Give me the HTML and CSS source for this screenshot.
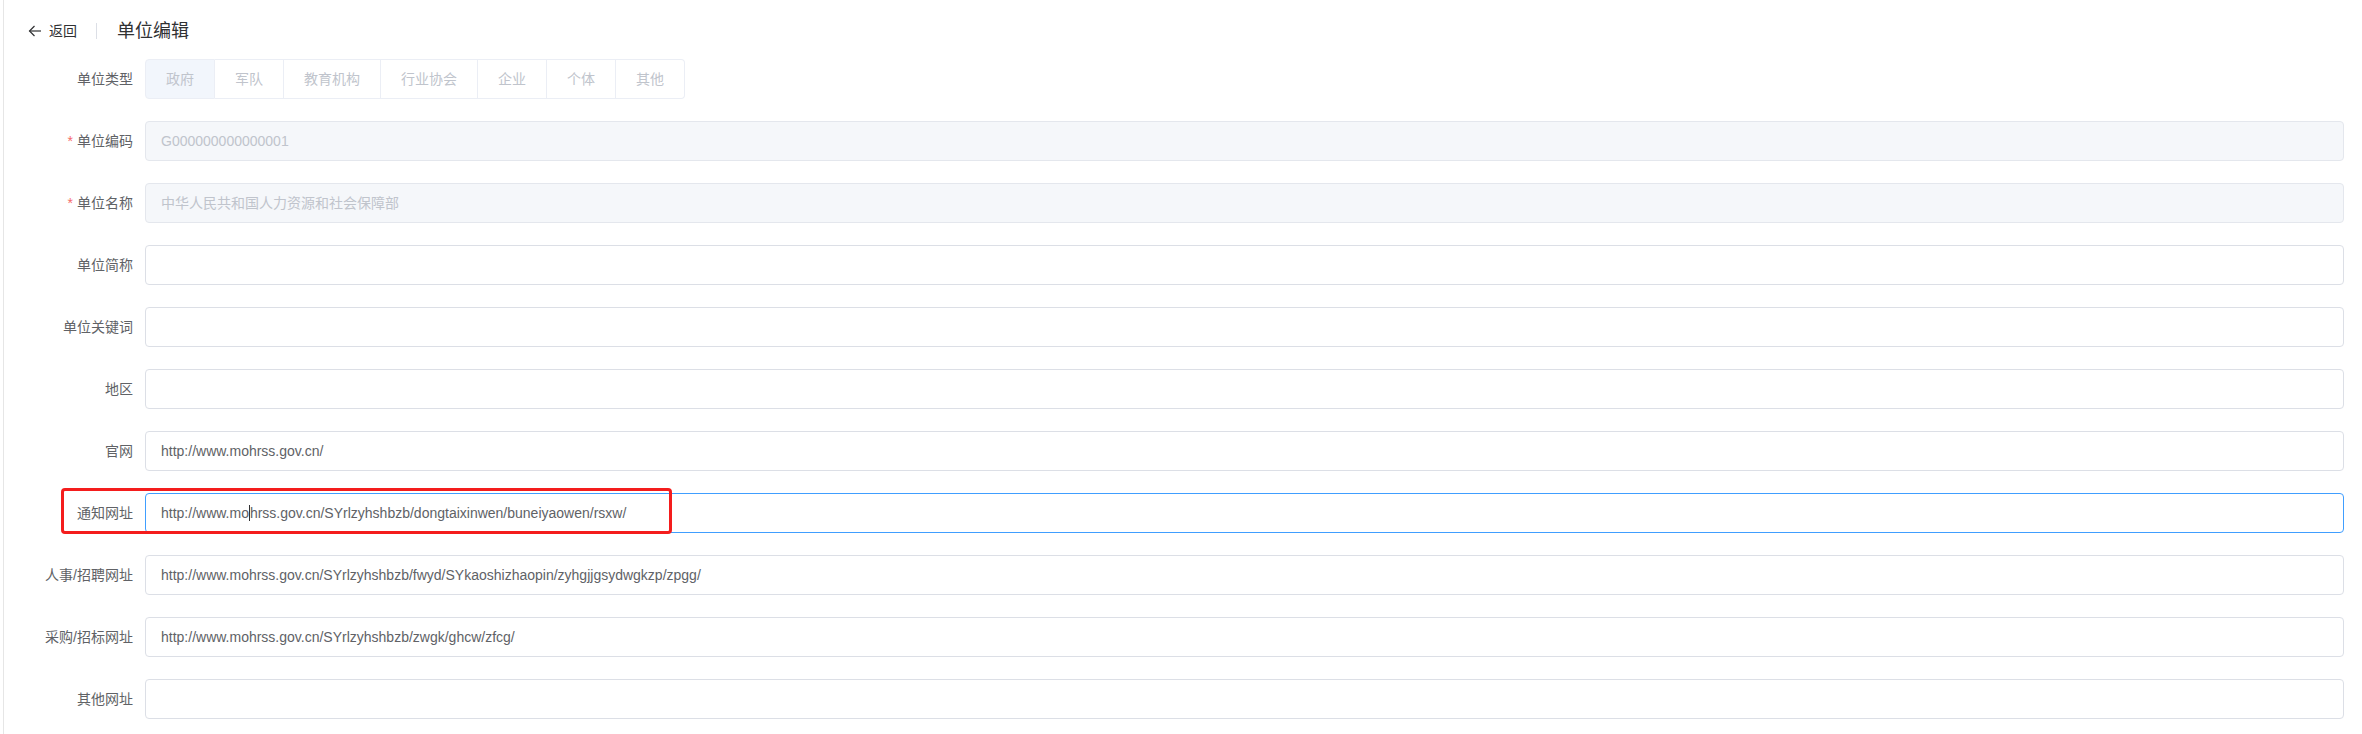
FILE: index.html
```html
<!DOCTYPE html>
<html lang="zh-CN">
<head>
<meta charset="utf-8">
<title>单位编辑</title>
<link rel="stylesheet" href="styles.css">
</head>
<body>
<div class="page">
  <div class="page-header">
    <div class="back">
      <svg class="back-icon" width="14" height="14" viewBox="0 0 14 14" aria-hidden="true">
        <path d="M1.5 7 H13" fill="none" stroke="#303133" stroke-width="1.2"/>
        <path d="M6.5 2 L1.5 7 L6.5 12" fill="none" stroke="#303133" stroke-width="1.2"/>
      </svg>
      <span class="back-text">返回</span>
    </div>
    <div class="header-title">单位编辑</div>
  </div>

  <form class="form">
    <div class="form-item">
      <label class="form-label">单位类型</label>
      <div class="form-content">
        <div class="segment">
          <span class="seg-item is-checked">政府</span>
          <span class="seg-item">军队</span>
          <span class="seg-item">教育机构</span>
          <span class="seg-item">行业协会</span>
          <span class="seg-item">企业</span>
          <span class="seg-item">个体</span>
          <span class="seg-item">其他</span>
        </div>
      </div>
    </div>

    <div class="form-item">
      <label class="form-label"><span class="req">*</span>单位编码</label>
      <div class="form-content"><div class="input is-disabled">G000000000000001</div></div>
    </div>

    <div class="form-item">
      <label class="form-label"><span class="req">*</span>单位名称</label>
      <div class="form-content"><div class="input is-disabled">中华人民共和国人力资源和社会保障部</div></div>
    </div>

    <div class="form-item">
      <label class="form-label">单位简称</label>
      <div class="form-content"><div class="input"></div></div>
    </div>

    <div class="form-item">
      <label class="form-label">单位关键词</label>
      <div class="form-content"><div class="input"></div></div>
    </div>

    <div class="form-item">
      <label class="form-label">地区</label>
      <div class="form-content"><div class="input"></div></div>
    </div>

    <div class="form-item">
      <label class="form-label">官网</label>
      <div class="form-content"><div class="input">http://www.mohrss.gov.cn/</div></div>
    </div>

    <div class="form-item is-marked">
      <label class="form-label">通知网址</label>
      <div class="form-content"><div class="input is-focus">http://www.mo<span class="caret"></span>hrss.gov.cn/SYrlzyhshbzb/dongtaixinwen/buneiyaowen/rsxw/</div></div>
      <div class="mark-box"></div>
    </div>

    <div class="form-item">
      <label class="form-label">人事/招聘网址</label>
      <div class="form-content"><div class="input">http://www.mohrss.gov.cn/SYrlzyhshbzb/fwyd/SYkaoshizhaopin/zyhgjjgsydwgkzp/zpgg/</div></div>
    </div>

    <div class="form-item">
      <label class="form-label">采购/招标网址</label>
      <div class="form-content"><div class="input">http://www.mohrss.gov.cn/SYrlzyhshbzb/zwgk/ghcw/zfcg/</div></div>
    </div>

    <div class="form-item">
      <label class="form-label">其他网址</label>
      <div class="form-content"><div class="input"></div></div>
    </div>
  </form>
</div>
</body>
</html>
```

FILE: styles.css
```css
html, body {
  margin: 0;
  padding: 0;
  background: #ffffff;
}

body {
  font-family: "Liberation Sans", "Noto Sans CJK SC", sans-serif;
  font-size: 14px;
  color: #606266;
}

.page {
  margin-left: 3px;
  border-left: 1px solid #e6e6e6;
  min-height: 734px;
  box-sizing: border-box;
  padding: 19px 18px 0 24px;
}

/* header */
.page-header {
  display: flex;
  align-items: center;
  height: 24px;
}

.back {
  display: flex;
  align-items: center;
  position: relative;
  margin-right: 40px;
  color: #303133;
  font-size: 14px;
}

.back::after {
  content: "";
  position: absolute;
  right: -20px;
  top: 50%;
  width: 1px;
  height: 16px;
  margin-top: -8px;
  background: #dcdfe6;
}

.back-icon {
  display: block;
  margin-right: 7px;
}

.back-text {
  line-height: 24px;
}

.header-title {
  font-size: 18px;
  color: #303133;
  line-height: 24px;
}

/* form */
.form {
  margin: 16px 0 0 0;
}

.form-item {
  display: flex;
  margin-bottom: 22px;
  position: relative;
}

.form-label {
  flex: 0 0 117px;
  box-sizing: border-box;
  padding-right: 12px;
  text-align: right;
  line-height: 40px;
  font-size: 14px;
  color: #606266;
  white-space: nowrap;
}

.req {
  color: #f56c6c;
  margin-right: 4px;
}

.form-content {
  flex: 1;
  min-width: 0;
}

/* segmented radio */
.segment {
  display: inline-flex;
}

.seg-item {
  display: block;
  padding: 12px 20px;
  line-height: 14px;
  font-size: 14px;
  color: #c0c4cc;
  background: #ffffff;
  border: 1px solid #ebeef5;
  border-left: 0;
}

.seg-item:first-child {
  border-left: 1px solid #ebeef5;
  border-radius: 4px 0 0 4px;
}

.seg-item:last-child {
  border-radius: 0 4px 4px 0;
}

.seg-item.is-checked {
  background: #f2f6fc;
}

/* inputs */
.input {
  height: 40px;
  box-sizing: border-box;
  border: 1px solid #dcdfe6;
  border-radius: 4px;
  padding: 0 15px;
  line-height: 38px;
  font-size: 14px;
  color: #606266;
  background: #ffffff;
  white-space: nowrap;
  overflow: hidden;
}

.input.is-disabled {
  background: #f5f7fa;
  border-color: #e4e7ed;
  color: #c0c4cc;
}

.input.is-focus {
  border-color: #409eff;
}

.caret {
  display: inline-block;
  width: 0;
  height: 16px;
  border-left: 1px solid #303133;
  vertical-align: middle;
  margin-top: -2px;
}

/* annotation box */
.mark-box {
  position: absolute;
  left: 33px;
  top: -5px;
  width: 611px;
  height: 46px;
  box-sizing: border-box;
  border: 3px solid #f41d1d;
  border-radius: 4px;
  pointer-events: none;
}
```
